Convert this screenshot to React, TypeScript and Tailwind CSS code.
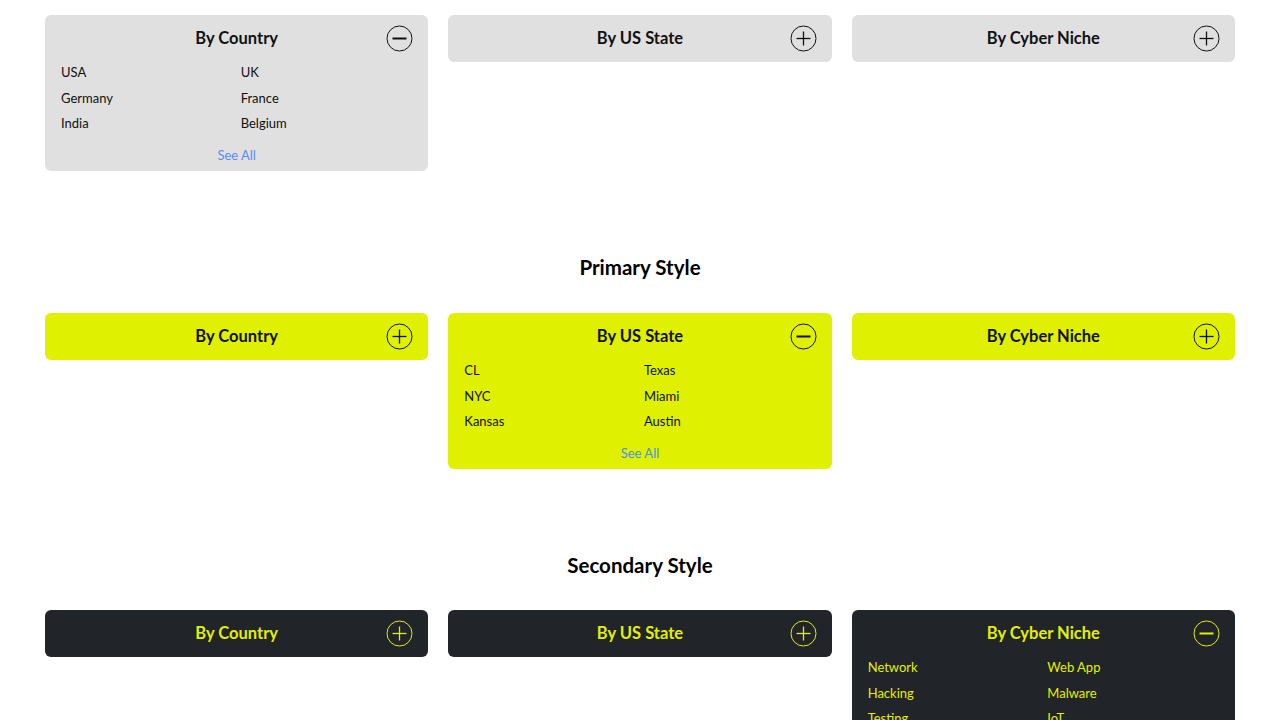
import { useState } from 'react';

type Variant = 'default' | 'primary' | 'secondary';

const groups = [
  { title: 'By Country', items: ['USA', 'UK', 'Germany', 'France', 'India', 'Belgium'] },
  { title: 'By US State', items: ['CL', 'Texas', 'NYC', 'Miami', 'Kansas', 'Austin'] },
  { title: 'By Cyber Niche', items: ['Network', 'Web App', 'Hacking', 'Malware', 'Testing', 'IoT'] },
];

const styles: Record<Variant, { card: string; text: string; icon: string; link: string }> = {
  default: { card: 'bg-[#e0e0e0]', text: 'text-[#111111]', icon: '#111111', link: 'text-[#5b8def]' },
  primary: { card: 'bg-[#dff000]', text: 'text-[#111111]', icon: '#111111', link: 'text-[#4a90e2]' },
  secondary: { card: 'bg-[#212429]', text: 'text-[#e2f000]', icon: '#e2f000', link: 'text-[#e2f000]' },
};

function ToggleIcon({ open, color }: { open: boolean; color: string }) {
  return (
    <svg width="27" height="27" viewBox="0 0 27 27" fill="none">
      <circle cx="13.5" cy="13.5" r="12.5" stroke={color} strokeWidth="1" />
      <line x1="6.5" y1="13.5" x2="20.5" y2="13.5" stroke={color} strokeWidth={open ? 2 : 1.3} />
      {!open && <line x1="13.5" y1="6.5" x2="13.5" y2="20.5" stroke={color} strokeWidth="1.3" />}
    </svg>
  );
}

function Dropdown({ title, items, variant, defaultOpen }: { title: string; items: string[]; variant: Variant; defaultOpen: boolean }) {
  const [open, setOpen] = useState(defaultOpen);
  const s = styles[variant];

  return (
    <div className={`rounded-[6px] ${s.card} ${s.text}`}>
      <div className="grid h-[47px] grid-cols-[40px_1fr_40px] items-center px-[15px]">
        <span />
        <span className="text-center text-[16.5px] font-bold">{title}</span>
        <button className="flex justify-end" onClick={() => setOpen(!open)}>
          <ToggleIcon open={open} color={s.icon} />
        </button>
      </div>
      {open && (
        <div className="px-4 pb-[6px]">
          <div className="grid grid-cols-2 gap-x-2 gap-y-[5.5px] text-[13px] leading-[20px]">
            {items.map((item) => (
              <span key={item}>{item}</span>
            ))}
          </div>
          <div className={`mt-3 text-center text-[13px] leading-[20px] ${s.link}`}>See All</div>
        </div>
      )}
    </div>
  );
}

function Row({ variant, openIndex }: { variant: Variant; openIndex: number }) {
  return (
    <div className="grid grid-cols-3 items-start gap-5">
      {groups.map((g, i) => (
        <Dropdown key={g.title} title={g.title} items={g.items} variant={variant} defaultOpen={i === openIndex} />
      ))}
    </div>
  );
}

export default function App() {
  return (
    <div className="min-h-screen bg-white px-[45px] pt-[15px] font-['Lato','Noto_Sans',sans-serif]">
      <Row variant="default" openIndex={0} />

      <h2 className="mt-[81px] mb-[31px] text-center text-[20.5px] font-bold leading-[30px] text-black">Primary Style</h2>
      <Row variant="primary" openIndex={1} />

      <h2 className="mt-[81px] mb-[30px] text-center text-[20.5px] font-bold leading-[30px] text-black">Secondary Style</h2>
      <Row variant="secondary" openIndex={2} />
    </div>
  );
}
